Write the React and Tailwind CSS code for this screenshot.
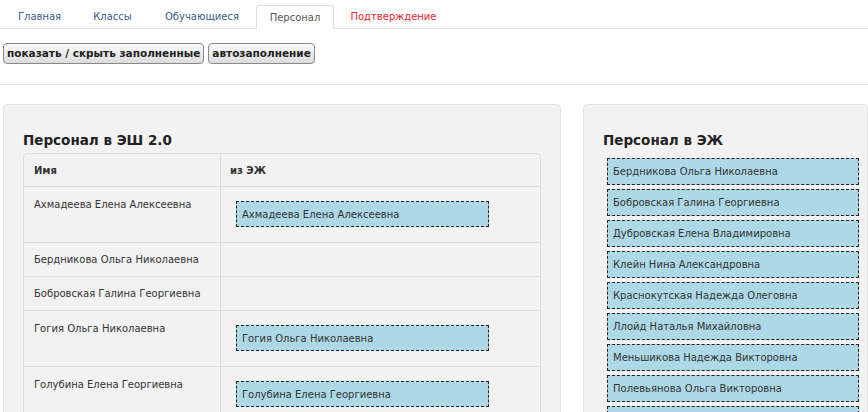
import React from 'react';

const tabs = [
  { label: 'Главная', w: 'w-[75px]' },
  { label: 'Классы', w: 'w-[71px]' },
  { label: 'Обучающиеся', w: 'w-[108px]' },
  { label: 'Персонал', w: 'w-[78px]', active: true },
  { label: 'Подтверждение', w: 'w-[119px]', red: true },
];

const rows = [
  { name: 'Ахмадеева Елена Алексеевна', match: 'Ахмадеева Елена Алексеевна' },
  { name: 'Бердникова Ольга Николаевна' },
  { name: 'Бобровская Галина Георгиевна' },
  { name: 'Гогия Ольга Николаевна', match: 'Гогия Ольга Николаевна' },
  { name: 'Голубина Елена Георгиевна', match: 'Голубина Елена Георгиевна' },
];

const ejStaff = [
  'Бердникова Ольга Николаевна',
  'Бобровская Галина Георгиевна',
  'Дубровская Елена Владимировна',
  'Клейн Нина Александровна',
  'Краснокутская Надежда Олеговна',
  'Ллойд Наталья Михайловна',
  'Меньшикова Надежда Викторовна',
  'Полевьянова Ольга Викторовна',
  'Пономарева Ирина Сергеевна',
];

const font = { fontFamily: '"DejaVu Sans", Tahoma, sans-serif' };

const Chip = ({ children, className = '' }) => (
  <div className={`border border-dashed border-[#222] bg-[#add8e6] flex items-center pl-[5px] text-[10px] text-[#333] whitespace-nowrap overflow-hidden ${className}`}>
    {children}
  </div>
);

export default function App() {
  return (
    <div className="w-[868px] h-[412px] overflow-hidden bg-white text-[#333]" style={font}>
      {/* tabs */}
      <div className="flex items-end h-[29px] border-b border-[#ddd] pl-[2px]">
        {tabs.map(t => (
          <div
            key={t.label}
            className={`${t.w} h-[23px] flex items-center justify-center text-[10px] ${
              t.active ? 'bg-white border border-b-0 border-[#ddd] rounded-t-[3px] text-[#555] -mb-px h-[24px]' : ''
            } ${t.red ? 'text-[#e8232b]' : t.active ? '' : 'text-[#3d5a8a]'}`}
          >
            {t.label}
          </div>
        ))}
      </div>

      {/* actions */}
      <div className="flex gap-[4px] pl-[3px] pt-[14px] pb-[20px] border-b border-[#e6e6e6]">
        <button className="h-[21px] px-[3px] text-[10.5px] font-bold text-[#222] border border-[#888] rounded-[4px] bg-gradient-to-b from-[#fafafa] to-[#dcdcdc]">
          показать / скрыть заполненные
        </button>
        <button className="h-[21px] px-[3px] text-[10.5px] font-bold text-[#222] border border-[#888] rounded-[4px] bg-gradient-to-b from-[#fafafa] to-[#dcdcdc]">
          автозаполнение
        </button>
      </div>

      {/* panels */}
      <div className="flex gap-[22px] pl-[3px] pt-[19px]">
        <div className="w-[558px] shrink-0 bg-[#f2f2f2] border border-[#e4e4e4] rounded-[4px] px-[19px] pt-[24px] h-[400px]">
          <h2 className="text-[13.5px] font-bold text-[#222] leading-[22px]">Персонал в ЭШ 2.0</h2>
          <div className="mt-[2px] w-[518px] border border-[#ddd] rounded-t-[4px]">
            <div className="flex h-[33px] border-b border-[#ddd] text-[10px] font-bold text-[#333]">
              <div className="w-[197px] border-r border-[#ddd] pl-[10px] flex items-center">Имя</div>
              <div className="flex-1 pl-[9px] flex items-center">из ЭЖ</div>
            </div>
            {rows.map(r => (
              <div key={r.name} className={`flex border-b border-[#ddd] text-[10px] ${r.match ? 'h-[56px]' : 'h-[34px]'}`}>
                <div className={`w-[197px] border-r border-[#ddd] pl-[10px] ${r.match ? 'pt-[10px]' : 'flex items-center'}`}>{r.name}</div>
                <div className="flex-1 pl-[15px] pt-[14px]">
                  {r.match && <Chip className="w-[253px] h-[26px]">{r.match}</Chip>}
                </div>
              </div>
            ))}
          </div>
        </div>

        <div className="flex-1 bg-[#f2f2f2] border border-[#e4e4e4] rounded-[4px] pl-[19px] pt-[24px] h-[400px]">
          <h2 className="text-[13.5px] font-bold text-[#222] leading-[22px]">Персонал в ЭЖ</h2>
          <div className="mt-[7px] pl-[4px] flex flex-col gap-[4px]">
            {ejStaff.map(n => (
              <Chip key={n} className="w-[252px] h-[27px]">{n}</Chip>
            ))}
          </div>
        </div>
      </div>
    </div>
  );
}
